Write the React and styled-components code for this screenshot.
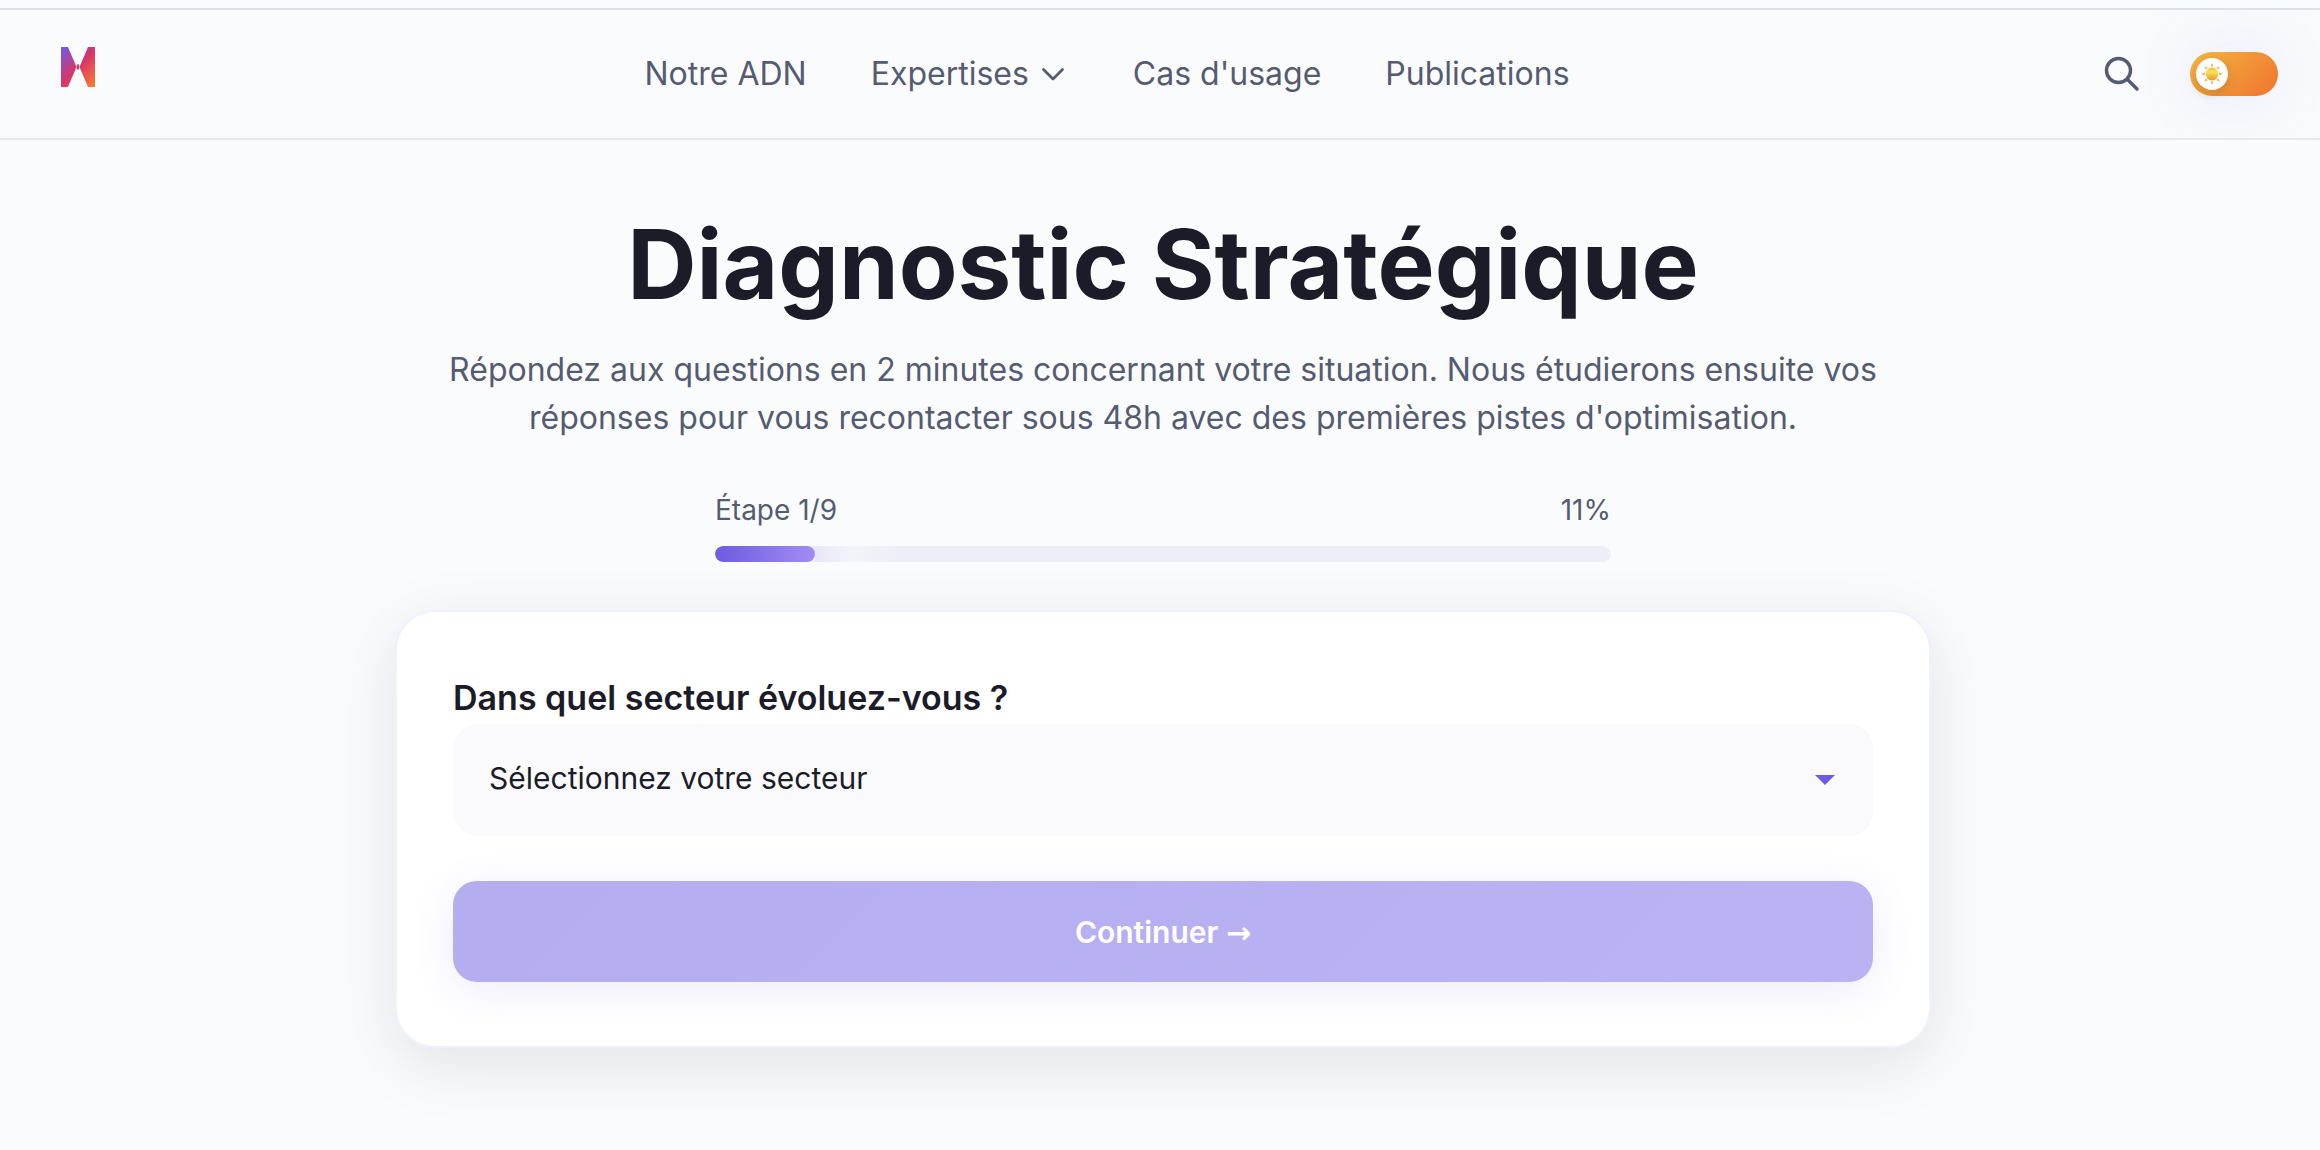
import React, { useState } from 'react'
import styled, { createGlobalStyle } from 'styled-components';

const TOTAL_STEPS = 9;

const sectors = ['Industrie', 'Commerce', 'Services', 'Santé', 'Finance'];

const Logo = () => (
    <svg width="80" height="64" viewBox="0 0 80 64" aria-hidden="true">
        <defs>
            <linearGradient id="logo-fill" gradientUnits="userSpaceOnUse" x1="19" y1="7" x2="57" y2="43">
                <stop offset="0" stopColor="#6c5ce7" />
                <stop offset="0.5" stopColor="#d9346a" />
                <stop offset="1" stopColor="#f9822b" />
            </linearGradient>
        </defs>
        <g fill="url(#logo-fill)">
            <path d="M21 5h7l8.500 20-8.500 20h-7z" />
            <path d="M55 5h-7l-8.500 20 8.500 20h7z" />
            <ellipse cx="38" cy="25" rx="1.3" ry="3" />
        </g>
    </svg>
)

const ChevronIcon = () => (
    <svg width="28" height="24" viewBox="0 0 28 24" fill="none" stroke="currentColor" strokeWidth="2.8" strokeLinecap="round" strokeLinejoin="round" aria-hidden="true">
        <path d="M2.5 7.5 12 17l9.5-9.5" />
    </svg>
)

const SearchIcon = () => (
    <svg width="40" height="40" viewBox="0 0 40 40" fill="none" stroke="currentColor" strokeWidth="3.4" strokeLinecap="round" aria-hidden="true">
        <circle cx="16.5" cy="16.5" r="12" />
        <path d="M25.5 25.5 35 35" />
    </svg>
)

const SunIcon = () => (
    <svg width="24" height="24" viewBox="0 0 24 24" aria-hidden="true">
        <defs>
            <linearGradient id="sun-fill" x1="0" y1="0" x2="0" y2="1">
                <stop offset="0" stopColor="#f3c02f" />
                <stop offset="0.35" stopColor="#fae25a" />
                <stop offset="1" stopColor="#e5972b" />
            </linearGradient>
        </defs>
        <g fill="#e9b25a">
            {[0, 45, 90, 135, 180, 225, 270, 315].map((angle) => (
                <path key={angle} d="M12 1l1.4 3.6h-2.8z" transform={`rotate(${angle} 12 12)`} />
            ))}
        </g>
        <circle cx="12" cy="12" r="6.4" fill="url(#sun-fill)" />
    </svg>
)

const App = () => {
    const [light, setLight] = useState(true);
    const [sector, setSector] = useState('');
    const [step] = useState(1);
    const percent = Math.round((step / TOTAL_STEPS) * 100);

    return (
        <>
            <GlobalStyle />
            <TopStrip />
            <Header>
                <LogoLink href="#" aria-label="Accueil"><Logo /></LogoLink>
                <Nav>
                    <NavLink href="#adn">Notre ADN</NavLink>
                    <NavLink href="#expertises">Expertises <ChevronIcon /></NavLink>
                    <NavLink href="#cas">Cas d'usage</NavLink>
                    <NavLink href="#publications">Publications</NavLink>
                </Nav>
                <Actions>
                    <IconButton type="button" aria-label="Rechercher"><SearchIcon /></IconButton>
                    <Toggle>
                        <ToggleInput
                            type="checkbox"
                            role="switch"
                            aria-label="Thème clair"
                            checked={light}
                            onChange={(e) => setLight(e.target.checked)}
                        />
                        <Knob $light={light}><SunIcon /></Knob>
                    </Toggle>
                </Actions>
            </Header>
            <Main>
                <Title>Diagnostic Stratégique</Title>
                <Intro>
                    Répondez aux questions en 2 minutes concernant votre situation. Nous étudierons ensuite vos réponses pour vous recontacter sous 48h avec des premières pistes d'optimisation.
                </Intro>
                <Progress>
                    <ProgressInfo>
                        <span>Étape {step}/{TOTAL_STEPS}</span>
                        <span>{percent}%</span>
                    </ProgressInfo>
                    <Track role="progressbar" aria-label="Progression" aria-valuenow={percent} aria-valuemin={0} aria-valuemax={100}>
                        <Fill style={{ width: `${(step / TOTAL_STEPS) * 100}%` }} />
                        <Shimmer />
                    </Track>
                </Progress>
                <Card onSubmit={(e) => e.preventDefault()}>
                    <Question htmlFor="sector">Dans quel secteur évoluez-vous ?</Question>
                    <SelectWrap>
                        <Select id="sector" value={sector} onChange={(e) => setSector(e.target.value)}>
                            <option value="">Sélectionnez votre secteur</option>
                            {sectors.map((name) => <option key={name} value={name}>{name}</option>)}
                        </Select>
                        <Caret />
                    </SelectWrap>
                    <Submit type="submit" disabled={!sector}>Continuer <Arrow>→</Arrow></Submit>
                </Card>
            </Main>
        </>
    )
}

const GlobalStyle = createGlobalStyle`
  * {
    box-sizing: border-box;
  }

  body {
    margin: 0;
    background: #fafbfd;
    color: #1c1c28;
    font-family: Inter, "Liberation Sans", sans-serif;
  }
`;

const TopStrip = styled.div`
  height: 10px;
  background: #f7fbff;
  border-bottom: 2px solid #dce1e8;
`;

const Header = styled.header`
  display: flex;
  align-items: center;
  justify-content: space-between;
  height: 130px;
  padding: 0 42px 0 40px;
  border-bottom: 2px solid #e6e6f6;
  overflow: hidden;
`;

const LogoLink = styled.a`
  display: flex;
`;

const Nav = styled.nav`
  display: flex;
  align-items: center;
  gap: 64px;
`;

const NavLink = styled.a`
  display: flex;
  align-items: center;
  gap: 12px;
  color: #555b70;
  font-size: 32px;
  line-height: 48px;
  text-decoration: none;
`;

const Actions = styled.div`
  display: flex;
  align-items: center;
  gap: 40px;
`;

const IconButton = styled.button`
  display: flex;
  padding: 8px;
  border: 0;
  background: none;
  color: #555b70;
  cursor: pointer;
`;

const Toggle = styled.label`
  display: flex;
  width: 88px;
  height: 44px;
  padding: 6px;
  border-radius: 22px;
  background: linear-gradient(135deg, #f4b740, #ef7330);
  box-shadow: 0 0 80px rgba(108, 92, 231, 0.16);
  cursor: pointer;
`;

const ToggleInput = styled.input`
  position: absolute;
  width: 1px;
  height: 1px;
  margin: 0;
  opacity: 0;
`;

const Knob = styled.span`
  display: flex;
  align-items: center;
  justify-content: center;
  width: 32px;
  height: 32px;
  margin-left: ${({ $light }) => ($light ? '0' : '44px')};
  border-radius: 50%;
  background: #fff;
  box-shadow: 0 4px 12px rgba(0, 0, 0, 0.15);
`;

const Main = styled.main`
  display: flex;
  flex-direction: column;
  align-items: center;
  padding: 64px 0 100px 6px;
`;

const Title = styled.h1`
  margin: 0;
  font-size: 96px;
  font-weight: 700;
  line-height: 120px;
  text-align: center;
`;

const Intro = styled.p`
  max-width: 1440px;
  margin: 22px 0 0;
  color: #555b70;
  font-size: 32px;
  line-height: 48px;
  text-align: center;
`;

const Progress = styled.div`
  width: 100%;
  max-width: 896px;
  margin-top: 48px;
`;

const ProgressInfo = styled.div`
  display: flex;
  justify-content: space-between;
  color: #555b70;
  font-size: 28px;
  line-height: 40px;
`;

const Track = styled.div`
  display: flex;
  height: 16px;
  margin-top: 16px;
  border-radius: 8px;
  background: #eeeef8;
  overflow: hidden;
`;

const Fill = styled.div`
  border-radius: 8px;
  background: linear-gradient(90deg, #6c5ce0, #a28cf3);
`;

const Shimmer = styled.div`
  width: 84px;
  background: linear-gradient(90deg, #e8e6f7, #f3f3fa 40%, #eeeef8);
`;

const Card = styled.form`
  display: flex;
  flex-direction: column;
  width: 100%;
  max-width: 1536px;
  margin-top: 48px;
  padding: 62px 56px 64px;
  border: 2px solid #f1f0fd;
  border-radius: 40px;
  background: #fff;
  box-shadow: 0 16px 64px rgba(0, 0, 0, 0.1);
`;

const Question = styled.label`
  padding-bottom: 2px;
  font-size: 34px;
  font-weight: 600;
  line-height: 48px;
`;

const SelectWrap = styled.div`
  position: relative;
`;

const Select = styled.select`
  display: block;
  width: 100%;
  height: 112px;
  padding: 0 80px 4px 34px;
  border: 2px solid #fafafc;
  border-radius: 24px;
  background: #fafafc;
  color: #1c1c28;
  font-family: inherit;
  font-size: 30px;
  appearance: none;
`;

const Caret = styled.span`
  position: absolute;
  top: 51px;
  right: 38px;
  border: 10px solid transparent;
  border-top-color: #6c5ce0;
  border-bottom: 0;
  pointer-events: none;
`;

const Submit = styled.button`
  height: 101px;
  margin-top: 45px;
  border: 0;
  border-radius: 24px;
  background: linear-gradient(135deg, #b4adef, #bab2f3);
  box-shadow: 0 8px 40px rgba(108, 92, 231, 0.12);
  color: #fff;
  font-family: inherit;
  font-size: 30px;
  font-weight: 600;
`;

const Arrow = styled.span`
  font-family: "DejaVu Sans", sans-serif;
`;

export default App
